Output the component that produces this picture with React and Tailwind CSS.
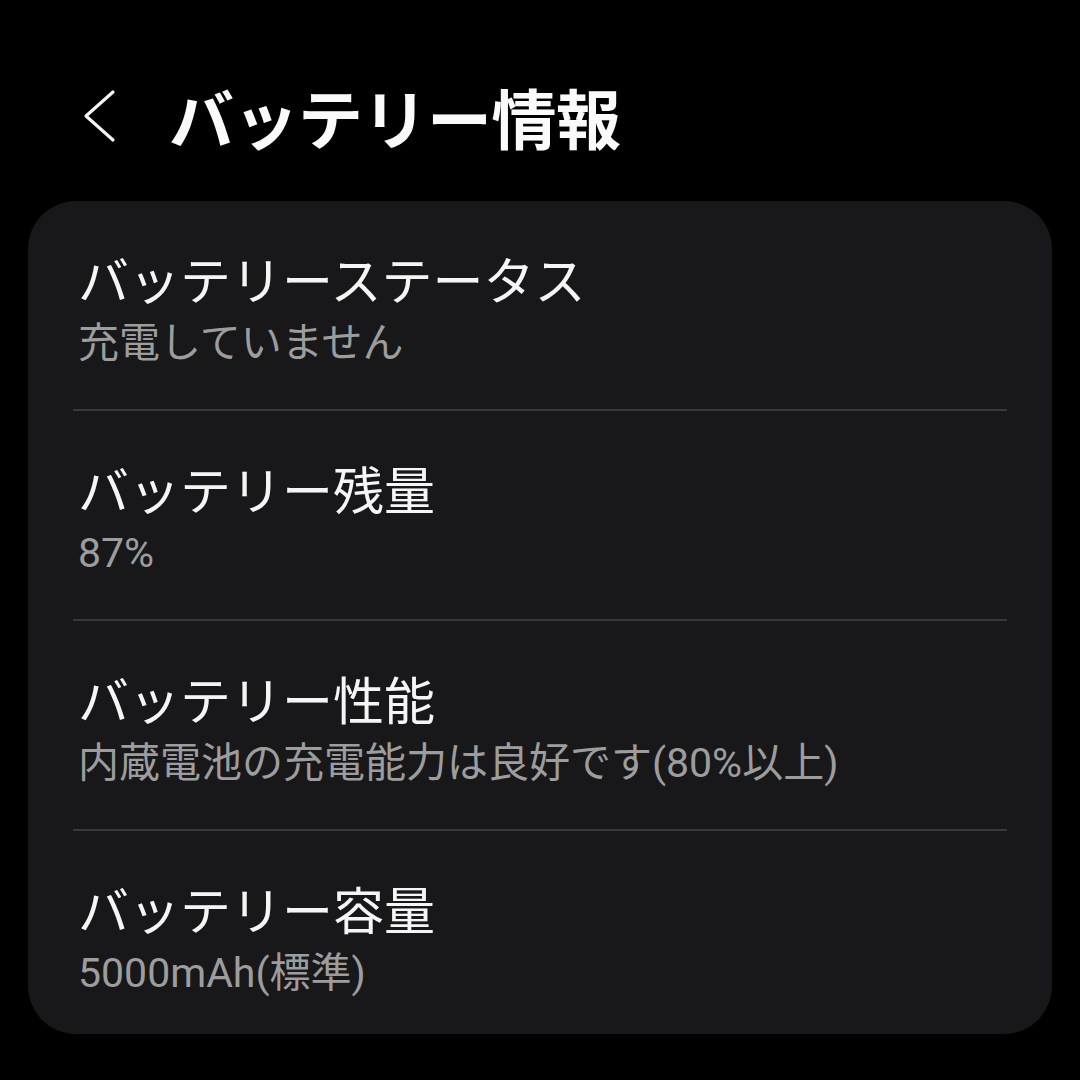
import React from "react";

const rows = [
  { title: "バッテリーステータス", value: "充電していません" },
  { title: "バッテリー残量", value: "87%" },
  { title: "バッテリー性能", value: "内蔵電池の充電能力は良好です(80%以上)" },
  { title: "バッテリー容量", value: "5000mAh(標準)" },
];

const BackIcon = () => (
  <svg width="40" height="56" viewBox="0 0 40 56" fill="none" className="block">
    <path d="M31 4 L4 28 L31 52" stroke="#f5f5f5" strokeWidth="3.2" strokeLinecap="round" strokeLinejoin="round" />
  </svg>
);

export default function App() {
  return (
    <div
      className="w-[1080px] h-[1080px] bg-black overflow-hidden"
      style={{ fontFamily: '"Noto Sans CJK JP", "Noto Sans", sans-serif' }}
    >
      <div className="flex items-center h-[201px] pl-[82px] pt-[30px]">
        <BackIcon />
        <h1 className="ml-[47px] text-[65px] leading-[80px] font-bold text-[#fafafa] tracking-[-0.5px]">
          バッテリー情報
        </h1>
      </div>
      <div className="mx-[28px] bg-[#18181a] rounded-[48px] pb-[35px]">
        {rows.map((row, i) => (
          <div key={row.title}>
            {i > 0 && <div className="mx-[45px] h-[2px] bg-[#38383a]" />}
            <div className={`px-[50px] pt-[46px] ${i < rows.length - 1 ? "pb-[40px]" : ""}`}>
              <div className="text-[51px] leading-[62px] text-[#f5f5f5]">{row.title}</div>
              <div
                className="mt-[8px] text-[41px] leading-[52px] text-[#9d9d9d]"
                style={{ fontFamily: 'Roboto, "Noto Sans CJK JP", sans-serif' }}
              >
                {row.value}
              </div>
            </div>
          </div>
        ))}
      </div>
    </div>
  );
}
